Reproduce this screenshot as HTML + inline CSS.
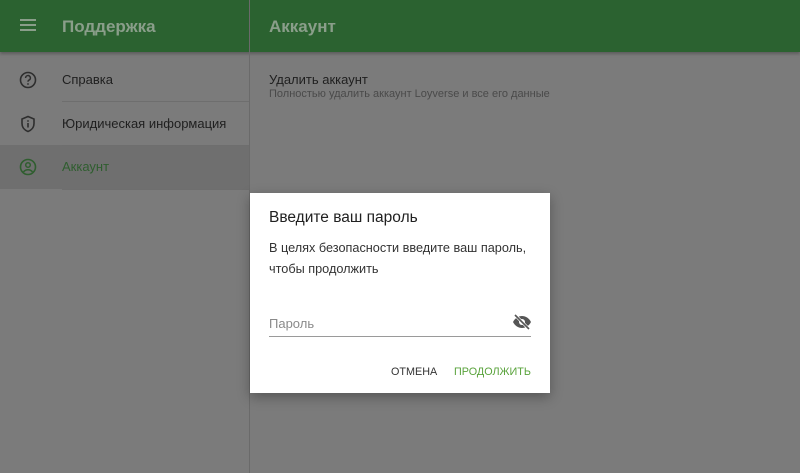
<!DOCTYPE html>
<html><head><meta charset="utf-8"><style>
*{margin:0;padding:0;box-sizing:border-box}
body{width:800px;height:473px;overflow:hidden;font-family:"Liberation Sans",Roboto,sans-serif;background:#7b7b7b;position:relative}
.hdr{position:absolute;left:0;top:0;width:800px;height:52px;background:#2b6230;box-shadow:0 2px 3px rgba(0,0,0,.25)}
.hdr .t{position:absolute;top:17px;font-size:17px;color:#8a9e8a;font-weight:bold}
.div{position:absolute;left:249px;top:0;width:1px;height:473px;background:#6a6a6a}
.item{position:absolute;left:0;width:249px;height:44px}
.item .l{position:absolute;left:62px;top:14px;font-size:13px;color:#1f1f1f}
.item svg{position:absolute;left:19px;top:13px}
.sep{position:absolute;left:62px;width:187px;height:1px;background:#6e6e6e}
.dlg{position:absolute;left:250px;top:193px;width:300px;height:200px;background:#fff;box-shadow:0 4px 12px rgba(0,0,0,.3)}
</style></head><body>
<div class="hdr">
<svg style="position:absolute;left:20px;top:19px" width="16" height="12"><rect y="0" width="16" height="2" fill="#8a9e8a"/><rect y="5" width="16" height="2" fill="#8a9e8a"/><rect y="10" width="16" height="2" fill="#8a9e8a"/></svg>
<div class="t" style="left:62px">Поддержка</div>
<div class="t" style="left:269px">Аккаунт</div>
</div>
<div class="div"></div>
<div class="item" style="top:58px"><svg width="18" height="18" viewBox="0 0 18 18"><circle cx="9" cy="9" r="7.5" fill="none" stroke="#2e2e2e" stroke-width="1.6"/><path d="M6.6 7a2.4 2.4 0 1 1 3.2 2.2c-.7.3-.8.8-.8 1.6" fill="none" stroke="#2e2e2e" stroke-width="1.5"/><circle cx="9" cy="13" r=".9" fill="#2e2e2e"/></svg><div class="l">Справка</div></div>
<div class="sep" style="top:101px"></div>
<div class="item" style="top:102px"><svg width="18" height="18" viewBox="0 0 18 18"><path d="M9 1.5l6 2.5v4.5c0 4-2.7 6.8-6 8-3.3-1.2-6-4-6-8V4z" fill="none" stroke="#2e2e2e" stroke-width="1.6"/><rect x="8.2" y="8" width="1.6" height="4.5" fill="#2e2e2e"/><circle cx="9" cy="6" r=".9" fill="#2e2e2e"/></svg><div class="l">Юридическая информация</div></div>
<div style="position:absolute;left:0;top:145px;width:249px;height:44px;background:#6f6f6f"></div>
<div class="sep" style="top:145px"></div>
<div class="item" style="top:145px"><svg width="18" height="18" viewBox="0 0 18 18"><circle cx="9" cy="9" r="7.5" fill="none" stroke="#2f5e2f" stroke-width="1.6"/><circle cx="9" cy="7" r="2.3" fill="none" stroke="#2f5e2f" stroke-width="1.5"/><path d="M4.5 14c1.2-1.6 2.7-2.2 4.5-2.2s3.3.6 4.5 2.2" fill="none" stroke="#2f5e2f" stroke-width="1.5"/></svg><div class="l" style="color:#2f5e2f">Аккаунт</div></div>
<div class="sep" style="top:189px"></div>
<div style="position:absolute;left:269px;top:72px;font-size:13px;color:#1f1f1f">Удалить аккаунт</div>
<div style="position:absolute;left:269px;top:88px;font-size:11px;color:#4a4a4a">Полностью удалить аккаунт Loyverse и все его данные</div>
<div class="dlg">
<div style="position:absolute;left:19px;top:16px;font-size:15.5px;color:#212121">Введите ваш пароль</div>
<div style="position:absolute;left:19px;top:45px;font-size:12.7px;line-height:21px;color:#333">В целях безопасности введите ваш пароль,<br>чтобы продолжить</div>
<div style="position:absolute;left:19px;top:123px;font-size:13px;color:#8a8a8a">Пароль</div>
<svg style="position:absolute;left:262px;top:121px" width="20" height="16" viewBox="0 0 20 16"><path d="M1 8c2-4 5.5-6 9-6s7 2 9 6c-2 4-5.5 6-9 6s-7-2-9-6z" fill="#555"/><circle cx="10" cy="8" r="3" fill="#fff"/><path d="M3 1l14 14" stroke="#fff" stroke-width="3"/><path d="M3 1l14 14" stroke="#555" stroke-width="1.6"/></svg>
<div style="position:absolute;left:19px;top:143px;width:262px;height:1px;background:#9a9a9a"></div>
<div style="position:absolute;left:141px;top:173px;font-size:10.8px;color:#333">ОТМЕНА</div>
<div style="position:absolute;left:204px;top:173px;font-size:10.8px;color:#5aa33c">ПРОДОЛЖИТЬ</div>
</div>
</body></html>
